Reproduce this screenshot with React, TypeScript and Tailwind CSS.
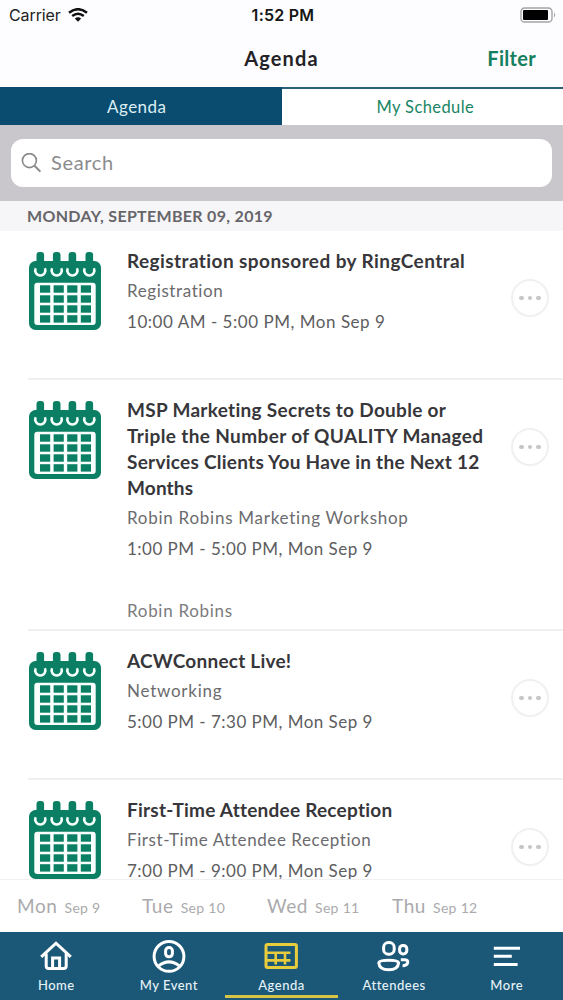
import React from "react";

function CalendarIcon() {
  return (
    <svg className="block h-[78px] w-[72px]" viewBox="0 0 72 78">
      <rect x="0" y="9" width="72" height="69" rx="6.5" fill="#0b7f63" />
      {[11.3, 27.7, 43.4, 60.3].map((x) => (
        <g key={x}>
          <rect x={x - 3.8} y="0" width="7.6" height="18" rx="3" fill="#0b7f63" />
          <path d={`M${x - 4.6} 16.2 A5.1 5.1 0 1 0 ${x + 4.6} 16.2`} fill="none" stroke="#f4fffc" strokeWidth="2.6" />
        </g>
      ))}
      <rect x="5.3" y="30.7" width="61.4" height="42.3" rx="3" fill="#f8fffd" />
      {[33.3, 43.3, 53.3, 63.2].map((y) =>
        [11, 24.6, 38.2, 51.8].map((x) => (
          <rect key={`${x}-${y}`} x={x} y={y} width="10.2" height="7.4" fill="#0b7f63" />
        )),
      )}
    </svg>
  );
}

function MoreButton() {
  return (
    <div className="flex size-[38px] items-center justify-center gap-1 rounded-full border-2 border-[#f0f0f1]">
      <span className="size-[4.5px] rounded-full bg-[#c6c6c8]" />
      <span className="size-[4.5px] rounded-full bg-[#c6c6c8]" />
      <span className="size-[4.5px] rounded-full bg-[#c6c6c8]" />
    </div>
  );
}

type Session = {
  title: { text: string; cls: string }[];
  track: string;
  trackCls: string;
  time: string;
  timeCls: string;
  speaker?: string;
  height: string;
};

const sessions: Session[] = [
  {
    title: [{ text: "Registration sponsored by RingCentral", cls: "tracking-[0.42px]" }],
    track: "Registration",
    trackCls: "tracking-[0.6px]",
    time: "10:00 AM - 5:00 PM, Mon Sep 9",
    timeCls: "tracking-[0.53px]",
    height: "h-[149px]",
  },
  {
    title: [
      { text: "MSP Marketing Secrets to Double or", cls: "tracking-[0.3px]" },
      { text: "Triple the Number of QUALITY Managed", cls: "tracking-[0.37px]" },
      { text: "Services Clients You Have in the Next 12", cls: "tracking-[0.26px]" },
      { text: "Months", cls: "tracking-[0.15px]" },
    ],
    track: "Robin Robins Marketing Workshop",
    trackCls: "tracking-[0.74px]",
    time: "1:00 PM - 5:00 PM, Mon Sep 9",
    timeCls: "tracking-[0.48px]",
    speaker: "Robin Robins",
    height: "h-[251px]",
  },
  {
    title: [{ text: "ACWConnect Live!", cls: "tracking-[0.23px]" }],
    track: "Networking",
    trackCls: "tracking-[0.75px]",
    time: "5:00 PM - 7:30 PM, Mon Sep 9",
    timeCls: "tracking-[0.48px]",
    height: "h-[149px]",
  },
  {
    title: [{ text: "First-Time Attendee Reception", cls: "tracking-[0.24px]" }],
    track: "First-Time Attendee Reception",
    trackCls: "tracking-[0.58px]",
    time: "7:00 PM - 9:00 PM, Mon Sep 9",
    timeCls: "tracking-[0.48px]",
    height: "h-[149px]",
  },
];

function SessionRow({ s }: { s: Session }) {
  return (
    <div className={`ml-7 flex shrink-0 border-b-2 border-[#efeff0] pl-px ${s.height}`}>
      <div className="w-[98px] shrink-0 pt-[21px]">
        <CalendarIcon />
      </div>
      <div className="flex-1 whitespace-nowrap pt-[17px]">
        {s.title.map((l) => (
          <div key={l.text} className={`text-[19px] font-bold leading-[26px] text-[#37363a] ${l.cls}`}>
            {l.text}
          </div>
        ))}
        <div className={`mt-1 text-[17px] leading-[26px] text-[#6b6b6e] ${s.trackCls}`}>{s.track}</div>
        <div className={`mt-[5px] text-[17px] leading-[26px] text-[#5d5d60] ${s.timeCls}`}>{s.time}</div>
        {s.speaker && (
          <div className="mt-[36px] text-[17px] leading-[26px] tracking-[0.7px] text-[#7b7b7e]">{s.speaker}</div>
        )}
      </div>
      <div className="w-[52px] shrink-0 pt-[48px]">
        <MoreButton />
      </div>
    </div>
  );
}

const days = [
  ["Mon", "Sep 9"],
  ["Tue", "Sep 10"],
  ["Wed", "Sep 11"],
  ["Thu", "Sep 12"],
];

const tabs = [
  {
    label: "Home",
    icon: (
      <g>
        <path d="M2.2 17.8 L17 4.2 L31.8 17.8" />
        <path d="M7.2 14.5 V27 Q7.2 29.6 9.8 29.6 H24.6 Q27.2 29.6 27.2 27 V14.5" />
        <path d="M13.6 29 V19 H20.6 V29" />
      </g>
    ),
  },
  {
    label: "My Event",
    icon: (
      <g>
        <circle cx="17" cy="17.4" r="14.9" />
        <rect x="13.6" y="8.6" width="6.8" height="9.2" rx="3.2" />
        <path d="M6 27.4 Q17 18.4 28 27.4" />
      </g>
    ),
  },
  {
    label: "Agenda",
    icon: (
      <g>
        <rect x="2" y="5.4" width="30.4" height="23.2" rx="1.5" />
        <path d="M2 13.8 H26.5 M2 21.4 H26.5 M11.7 12.5 V25.5 M21 12.5 V25.5" strokeWidth="2.6" />
      </g>
    ),
  },
  {
    label: "Attendees",
    icon: (
      <g>
        <rect x="6.6" y="3.6" width="10.6" height="11.6" rx="4.8" />
        <rect x="22.6" y="6.4" width="7.2" height="8.6" rx="3.4" />
        <path d="M1.8 23.8 Q2.4 21.2 11.7 21.2 Q21 21.2 21.6 23.8 Q21 30.8 11.7 30.8 Q2.4 30.8 1.8 23.8 Z" />
        <path d="M23.8 20.8 H28 Q31.6 21 30.6 24 Q29.6 26.8 25.6 26.8" />
      </g>
    ),
  },
  {
    label: "More",
    icon: <path d="M3.8 9.3 H30 M3.8 17.3 H21.8 M3.8 25.5 H27.6" />,
  },
];

export default function App() {
  return (
    <div className="flex h-[1000px] w-[563px] flex-col overflow-hidden bg-white font-['Lato',sans-serif]">
      <div className="grid h-[30px] shrink-0 grid-cols-3 items-center bg-[#fdfcfe] pb-px pl-[9px] pr-[6px] font-['Inter',sans-serif]">
        <div className="flex items-center gap-[7px] text-[16px] text-[#222]">
          <span className="tracking-[-0.1px]">Carrier</span>
          <svg className="h-[14px] w-[20px]" viewBox="0 0 20 14" fill="none" stroke="#111" strokeWidth="2.5">
            <path d="M1 4.8 Q10 -2.4 19 4.8" />
            <path d="M4.2 8.1 Q10 3.5 15.8 8.1" />
            <path d="M6.8 10.4 Q10 8 13.2 10.4 L10 13.8 Z" fill="#111" stroke="none" />
          </svg>
        </div>
        <div className="text-center text-[16px] font-semibold tracking-[0.25px] text-[#161616]">1:52 PM</div>
        <div className="flex justify-end">
          <svg className="h-[16px] w-[37px]" viewBox="0 0 37 16">
            <rect x="1" y="1" width="31" height="14" rx="3.6" fill="none" stroke="#a4a4a6" strokeWidth="1.4" />
            <rect x="3" y="3" width="25" height="10" rx="1" fill="#000" />
            <path d="M34 5.5 Q36.5 8 34 10.5 Z" fill="#a4a4a6" />
          </svg>
        </div>
      </div>

      <div className="grid h-[57px] shrink-0 grid-cols-3 items-center bg-[#fdfcfe] pb-[2px]">
        <div />
        <div className="text-center text-[20px] font-bold tracking-[1.1px] text-[#242226]">Agenda</div>
        <div className="pr-[27px] text-right text-[20px] font-bold tracking-[0.3px] text-[#14805f]">Filter</div>
      </div>

      <div className="grid h-[38px] shrink-0 grid-cols-2 text-center">
        <div className="bg-[#094c70] pr-2 text-[17px] leading-[39px] tracking-[0.5px] text-[#dceef4]">Agenda</div>
        <div className="border-t-2 border-[#2c6078] bg-white pl-[6px] text-[16.5px] leading-[36px] tracking-[0.4px] text-[#1a8564]">
          My Schedule
        </div>
      </div>

      <div className="h-[76px] shrink-0 bg-[#c9c7cb] px-[11px] pt-[14px]">
        <div className="flex h-[48px] items-center rounded-[12px] bg-white pl-[10px]">
          <svg className="size-[21px]" viewBox="0 0 21 21" fill="none" stroke="#88888b" strokeWidth="1.6">
            <circle cx="8.4" cy="7.6" r="7" />
            <path d="M13.5 12.7 L19.4 18.6" strokeWidth="2" />
          </svg>
          <span className="ml-[9px] pb-[3px] text-[20px] tracking-[0.65px] text-[#8b8b8e]">Search</span>
        </div>
      </div>

      <div className="h-[30px] shrink-0 bg-[#f6f5f8] pl-[27px] text-[16px] font-bold leading-[30px] tracking-[0.31px] text-[#66656a]">
        MONDAY, SEPTEMBER 09, 2019
      </div>

      <div className="flex min-h-0 flex-1 flex-col overflow-hidden">
        {sessions.map((s) => (
          <SessionRow key={s.title[0].text} s={s} />
        ))}
      </div>

      <div className="flex h-[53px] shrink-0 border-t border-[#f0f0f2] bg-white pl-[17px]">
        {days.map(([d, n]) => (
          <div key={d} className="flex w-[125px] items-baseline gap-[7px] pt-[12px] text-[#aaaaad]">
            <span className="text-[19px] tracking-[0.6px]">{d}</span>
            <span className="text-[14px] tracking-[0.3px]">{n}</span>
          </div>
        ))}
      </div>

      <div className="grid h-[68px] shrink-0 grid-cols-5 bg-[#1b5878] pb-[2px]">
        {tabs.map((t) => {
          const active = t.label === "Agenda";
          return (
            <div
              key={t.label}
              className={`flex flex-col items-center border-b-[3px] pt-[7px] ${active ? "border-[#d9c545]" : "border-transparent"}`}
            >
              <svg
                className={`size-[34px] shrink-0 ${active ? "text-[#e8cc3c]" : "text-white"}`}
                viewBox="0 0 34 34"
                fill="none"
                stroke="currentColor"
                strokeWidth="3"
              >
                {t.icon}
              </svg>
              <span className="mt-[2px] text-[13px] font-medium leading-[20px] tracking-[0.5px] text-[#e6f2f7]">
                {t.label}
              </span>
            </div>
          );
        })}
      </div>
    </div>
  );
}
